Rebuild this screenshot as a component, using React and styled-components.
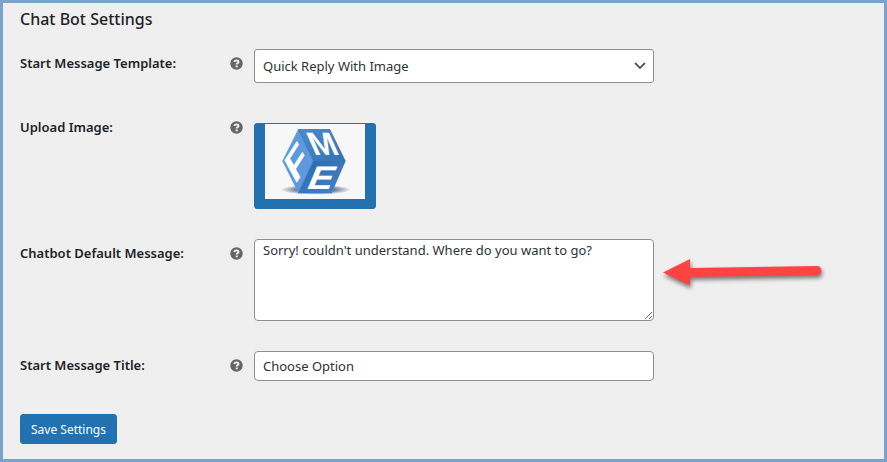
import React, { useState } from "react";
import styled, { createGlobalStyle } from "styled-components";

const GlobalStyle = createGlobalStyle`
  * {
    box-sizing: border-box;
  }
  body {
    margin: 0;
    background: #efefef;
    color: #1d2327;
    font-family: "Noto Sans", "Open Sans", sans-serif;
    font-size: 13px;
  }
`;

const HelpTip = () => (
  <TipButton type="button" aria-label="Help">
    <svg viewBox="0 0 14 14" width="14" height="14">
      <circle cx="6.500" cy="7.500" r="6.2" fill="#666" />
      <path
        d="M4.400 6C4.400 4.800 5.300 4.400 6.500 4.400s2 .5 2 1.500c0 1.300-1.800 1.200-1.800 2.700"
        fill="none"
        stroke="#efefef"
        strokeWidth="1.9"
      />
      <rect x="5.700" y="9.500" width="2" height="1.800" fill="#efefef" />
    </svg>
  </TipButton>
);

const CubeLogo = () => (
  <Logo viewBox="0 0 300 225" role="img" aria-label="FME">
    <defs>
      <radialGradient id="cubeShadow">
        <stop offset="0.5" stopColor="#5d738c" />
        <stop offset="1" stopColor="#5d738c" stopOpacity="0" />
      </radialGradient>
      <linearGradient id="cubeTop" x1="0" y1="0" x2="1" y2="1">
        <stop offset="0" stopColor="#4d8acb" />
        <stop offset="1" stopColor="#3673b6" />
      </linearGradient>
      <linearGradient id="cubeFront" x1="0" y1="0" x2="1" y2="1">
        <stop offset="0" stopColor="#2d66a8" />
        <stop offset="1" stopColor="#4586ca" />
      </linearGradient>
    </defs>
    <rect width="300" height="225" fill="#f7f7f7" />
    <ellipse cx="152" cy="197" rx="106" ry="15" fill="url(#cubeShadow)" />
    <path d="M100 15 52 111l48 97 45-97z" fill="#5c9add" />
    <path d="M100 15h95l47 96h-97z" fill="url(#cubeTop)" />
    <path d="M145 111h97l-42 97H100z" fill="url(#cubeFront)" />
    <path d="M100 15l45 96-45 97" fill="none" stroke="#3f7dc0" strokeWidth="3" />
    <CubeLetter transform="matrix(1 0 0.45 1 147 94)" $size={97}>M</CubeLetter>
    <CubeLetter transform="matrix(1.15 0 -0.42 1 120 195)" $size={98}>E</CubeLetter>
    <CubeLetter transform="matrix(0.8 -1.25 0.58 1.06 90 184)" $size={92}>F</CubeLetter>
  </Logo>
);

const PointerArrow = () => (
  <Arrow viewBox="0 0 168 40" aria-hidden="true">
    <path
      d="M1 20.500 28 7v9L155 14a4.500 4.500 0 0 1 0 9L28 25v8.500z"
      fill="#ff4343"
    />
  </Arrow>
);

const SettingRow = ({ id, label, children }) => (
  <Row>
    <LabelCell>
      <label htmlFor={id}>{label}</label>
      <HelpTip />
    </LabelCell>
    <Field>{children}</Field>
  </Row>
);

const App = () => {
  const [template, setTemplate] = useState("quick-reply-image");
  const [message, setMessage] = useState(
    "Sorry! couldn't understand. Where do you want to go?"
  );
  const [title, setTitle] = useState("Choose Option");

  return (
    <Page>
      <GlobalStyle />
      <Title>Chat Bot Settings</Title>
      <form onSubmit={(e) => e.preventDefault()}>
        <SettingRow id="template" label="Start Message Template:">
          <SelectWrap>
            <Select
              id="template"
              value={template}
              onChange={(e) => setTemplate(e.target.value)}
            >
              <option value="quick-reply-image">Quick Reply With Image</option>
              <option value="quick-reply">Quick Reply</option>
            </Select>
            <Chevron viewBox="0 0 12 8" aria-hidden="true">
              <path d="M1 1l5 5 5-5" fill="none" stroke="#50575e" strokeWidth="1.8" />
            </Chevron>
          </SelectWrap>
        </SettingRow>

        <SettingRow id="image" label="Upload Image:">
          <UploadButton id="image" type="button">
            <CubeLogo />
          </UploadButton>
        </SettingRow>

        <SettingRow id="message" label="Chatbot Default Message:">
          <TextArea
            id="message"
            value={message}
            onChange={(e) => setMessage(e.target.value)}
          />
          <PointerArrow />
        </SettingRow>

        <SettingRow id="title" label="Start Message Title:">
          <Input
            id="title"
            type="text"
            value={title}
            onChange={(e) => setTitle(e.target.value)}
          />
        </SettingRow>

        <SaveButton type="submit">Save Settings</SaveButton>
      </form>
    </Page>
  );
};

const Page = styled.main`
  min-height: 100vh;
  padding: 4px 17px 15px;
  border: 3px solid #7aa2cf;
`;

const Title = styled.h2`
  margin: 0 0 3px;
  font-size: 16px;
  line-height: 24px;
  font-weight: 500;
`;

const Row = styled.div`
  display: flex;
  align-items: flex-start;
  padding: 15px 0;
`;

const LabelCell = styled.div`
  display: flex;
  flex: 0 0 224px;
  align-items: center;
  justify-content: space-between;
  padding-top: 4px;
  line-height: 20px;
  font-weight: 600;
`;

const TipButton = styled.button`
  display: flex;
  padding: 0;
  border: 0;
  background: none;
  cursor: help;
`;

const Field = styled.div`
  display: flex;
  flex: 1;
  align-items: center;
  min-width: 0;
  padding-left: 10px;
`;

const SelectWrap = styled.div`
  position: relative;
  width: 100%;
  max-width: 400px;
`;

const Select = styled.select`
  display: block;
  appearance: none;
  width: 100%;
  height: 34px;
  padding: 0 24px 0 8px;
  border: 1px solid #8c8f94;
  border-radius: 3px;
  background: #fff;
  color: #2c3338;
  font: inherit;
`;

const Chevron = styled.svg`
  position: absolute;
  top: 13px;
  right: 8px;
  width: 12px;
  height: 8px;
  pointer-events: none;
`;

const UploadButton = styled.button`
  display: flex;
  height: 86px;
  margin-top: 10px;
  padding: 0 10px;
  border: 1px solid #2271b1;
  border-radius: 3px;
  background: #2271b1;
  cursor: pointer;
`;

const Logo = styled.svg`
  width: 100px;
  height: 75px;
`;

const CubeLetter = styled.text`
  fill: #fff;
  font-family: "Liberation Sans", sans-serif;
  font-size: ${({ $size }) => $size}px;
  font-weight: 700;
`;

const TextArea = styled.textarea`
  display: block;
  width: 100%;
  max-width: 400px;
  height: 82px;
  padding: 1px 8px;
  border: 1px solid #8c8f94;
  border-radius: 4px;
  background: #fff;
  color: #2c3338;
  font: inherit;
  line-height: 18px;
`;

const Arrow = styled.svg`
  flex: none;
  width: 168px;
  height: 40px;
  margin: 0 0 16px 8px;
  filter: drop-shadow(1px 3px 2px rgba(0, 0, 0, 0.5));
`;

const Input = styled.input`
  width: 100%;
  max-width: 400px;
  height: 30px;
  padding: 0 8px;
  border: 1px solid #8c8f94;
  border-radius: 4px;
  background: #fff;
  color: #2c3338;
  font: inherit;
`;

const SaveButton = styled.button`
  height: 30px;
  margin-top: 18px;
  padding: 0 10px;
  border: 1px solid #2271b1;
  border-radius: 3px;
  background: #2271b1;
  color: #fff;
  font: inherit;
  font-size: 12px;
  cursor: pointer;
`;

export default App;
